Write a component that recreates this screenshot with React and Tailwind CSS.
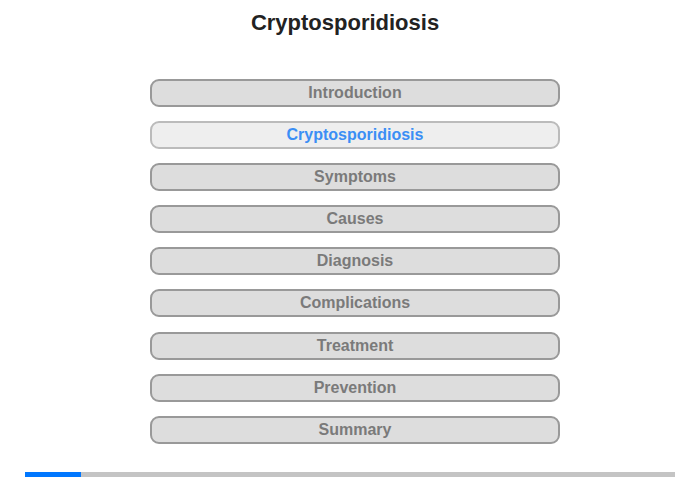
import React from "react";

const sections = [
  "Introduction",
  "Cryptosporidiosis",
  "Symptoms",
  "Causes",
  "Diagnosis",
  "Complications",
  "Treatment",
  "Prevention",
  "Summary",
];

const App = () => {
  const active = 1;

  return (
    <div className="w-[700px] h-[480px] bg-white flex flex-col font-['Liberation_Sans',Arial,sans-serif]">
      <h1 className="mt-[9px] text-center pr-[10px] text-[22px] leading-[27px] font-bold text-[#222]">Cryptosporidiosis</h1>

      <div className="mt-[43px] ml-[150px] flex flex-col gap-[14.1px]">
        {sections.map((name, i) => (
          <div
            key={name}
            className={`w-[410px] h-[28px] rounded-[9px] border-2 flex items-center justify-center text-[16px] font-bold ${
              i === active
                ? "bg-[#eeeeee] border-[#bbbbbb] text-[#3b8ef5]"
                : "bg-[#dddddd] border-[#999999] text-[#7a7a7a]"
            }`}
          >
            {name}
          </div>
        ))}
      </div>

      <div className="mt-[28px] ml-[25px] w-[650px] h-[5px] bg-[#c4c4c4] flex">
        <div className="w-[56px] h-full bg-[#0077ff]" />
      </div>
    </div>
  );
};

export default App;
